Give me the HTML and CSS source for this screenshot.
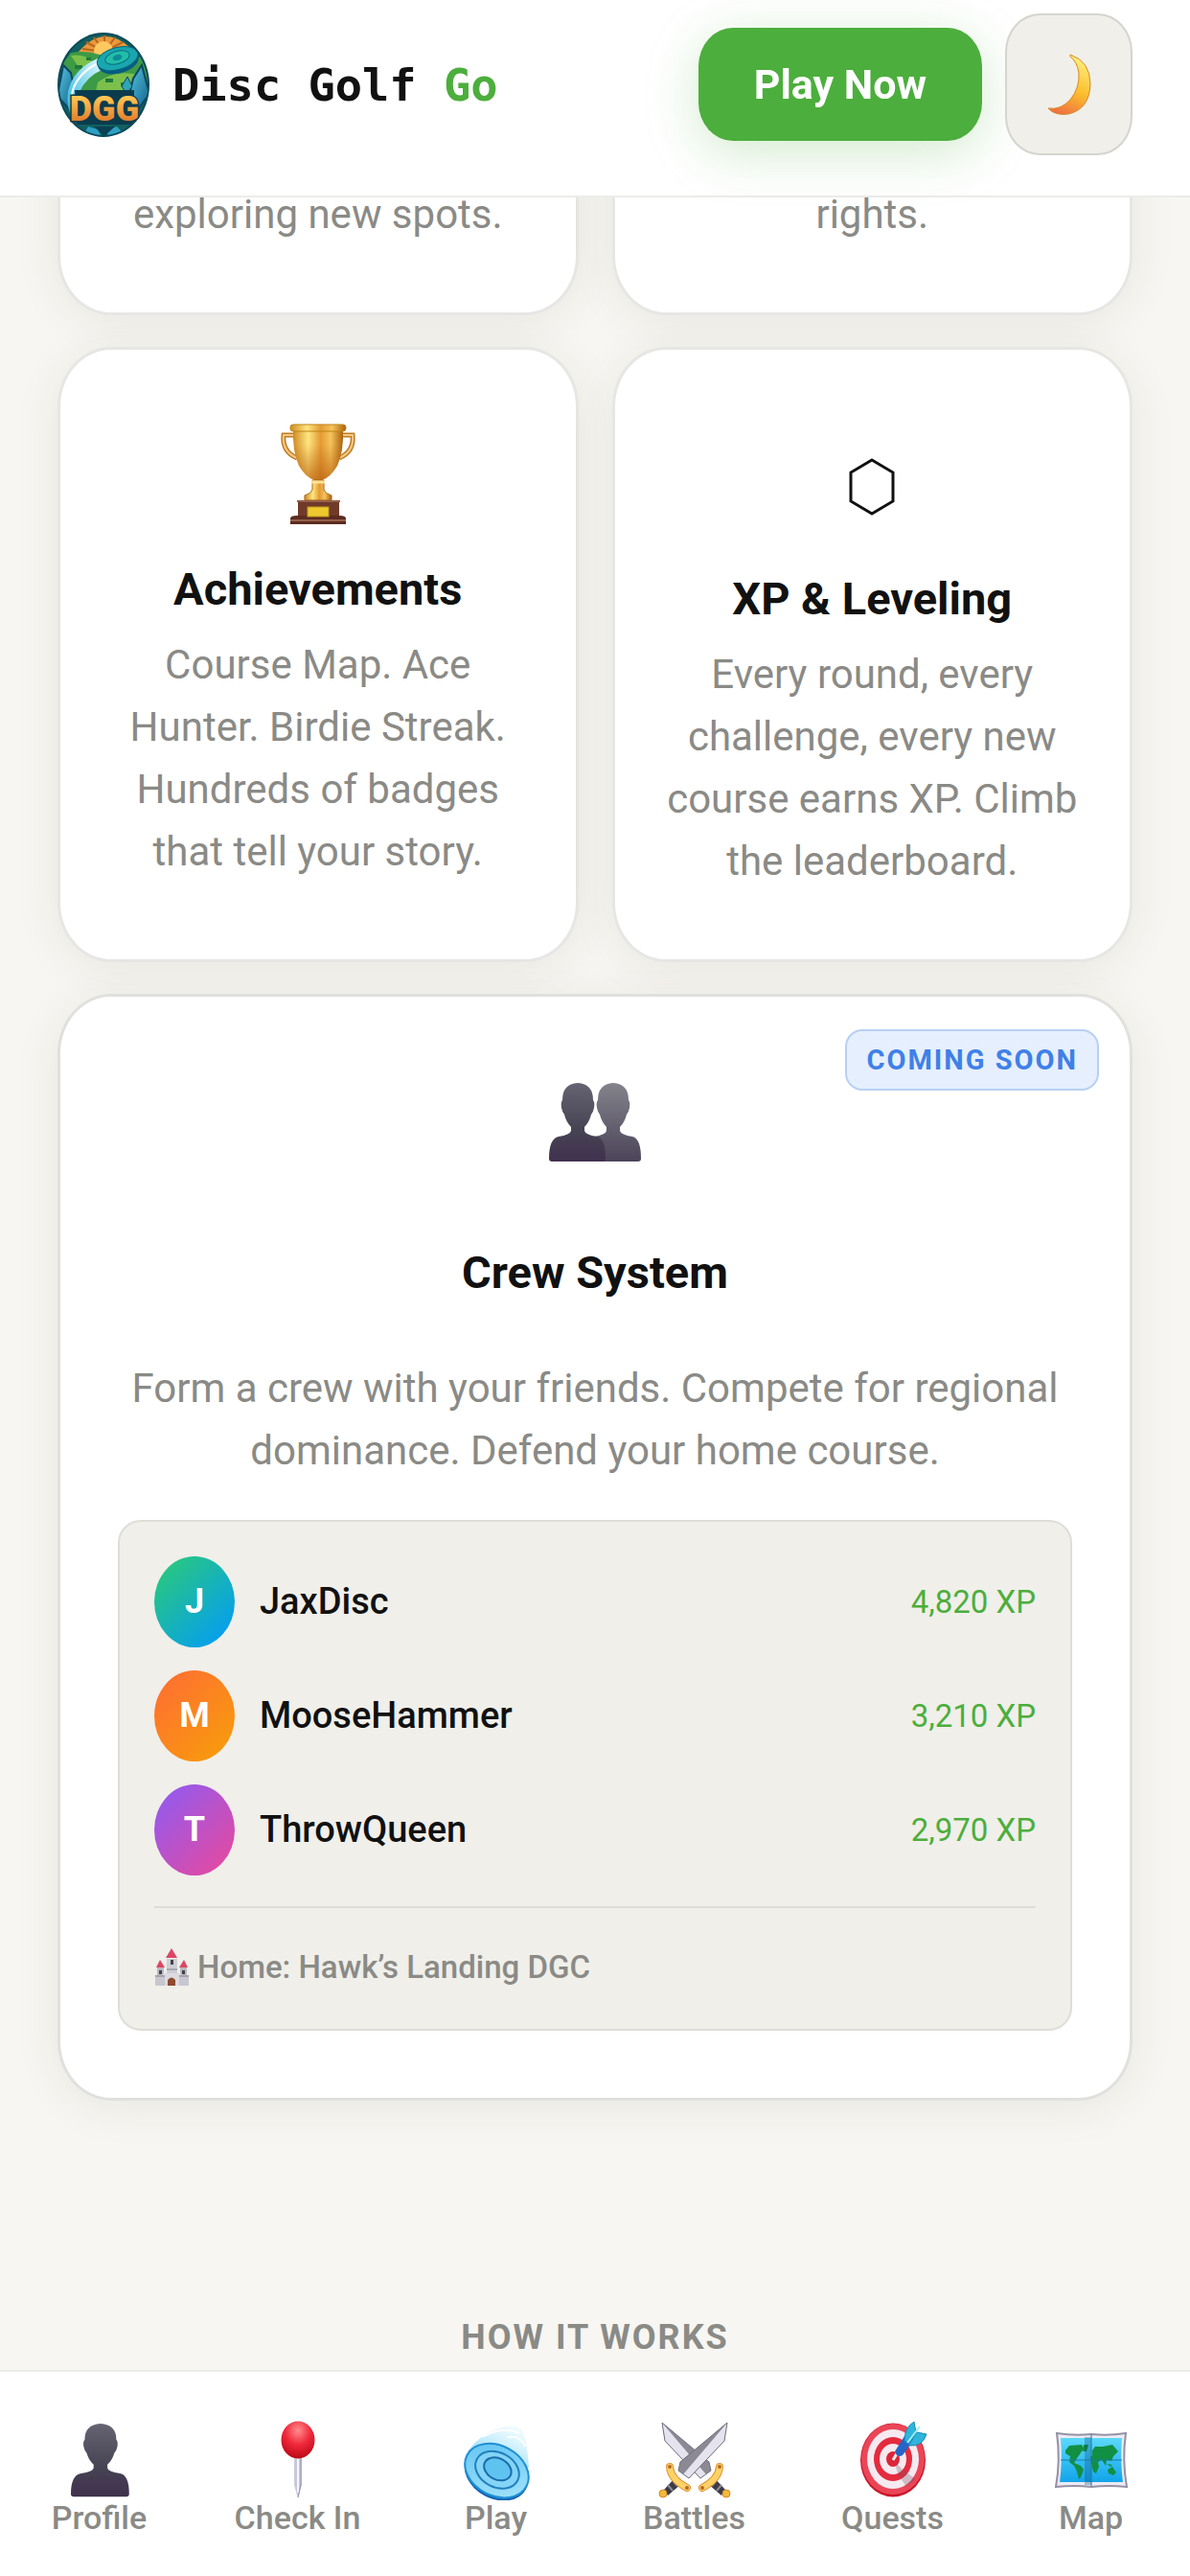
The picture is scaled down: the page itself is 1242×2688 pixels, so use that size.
FILE: index.html
```html
<!DOCTYPE html>
<html lang="en">
<head>
    <meta charset="utf-8">
    <meta name="viewport" content="width=device-width, initial-scale=1">
    <title>Disc Golf Go</title>
    <link rel="stylesheet" href="styles.css">
</head>
<body>
    <header class="site-header">
        <a class="brand" href="#">
            <svg class="brand-logo" viewBox="0 0 96 109" role="img" aria-label="Disc Golf Go logo">
                <defs>
                    <clipPath id="logo-clip"><ellipse cx="48" cy="54.500" rx="46" ry="52.500"/></clipPath>
                    <linearGradient id="logo-letters" x1="0" y1="0" x2="0" y2="1">
                        <stop offset="0.2" stop-color="#ffc653"/><stop offset="1" stop-color="#d8651f"/>
                    </linearGradient>
                    <linearGradient id="logo-crystal" x1="0" y1="0" x2="1" y2="1">
                        <stop offset="0" stop-color="#5bc9e0"/><stop offset="1" stop-color="#0e5f8c"/>
                    </linearGradient>
                    <linearGradient id="logo-trail" x1="1" y1="0" x2="0" y2="1">
                        <stop offset="0" stop-color="#e6fbff"/><stop offset="1" stop-color="#1fb4dc"/>
                    </linearGradient>
                </defs>
                <ellipse cx="48" cy="54.500" rx="48" ry="54.500" fill="#0c4a5a"/>
                <g clip-path="url(#logo-clip)">
                    <rect width="96" height="109" fill="#11605f"/>
                    <path d="M22 20Q48 -10 76 16L78 24H18Z" fill="#e9983b"/>
                    <path d="M49 20V3M49 20L38 5M49 20L60 5M49 20L30 10M49 20L68 10M49 20L26 17" stroke="#b9661f" stroke-width="2"/>
                    <circle cx="48" cy="19" r="10" fill="#ffc861"/>
                    <path d="M4 34L14 21Q30 18 44 23L96 26V70H4Z" fill="#3d9a46"/>
                    <path d="M14 24Q28 22 36 30T22 36ZM42 52Q60 38 84 44L78 62H40Z" fill="#7cc04b"/>
                    <path d="M18 34h8v4h-8zM50 48h8v4h-8zM66 52h7v4h-7zM30 26h5v3h-5z" fill="#1f7a3e"/>
                    <path d="M6 34L14 42L17 56L12 80L0 66Z" fill="url(#logo-crystal)" stroke="#0b4560" stroke-width="2"/>
                    <path d="M88 34L79 48L74 68L84 80L96 64Z" fill="url(#logo-crystal)" stroke="#0b4560" stroke-width="2"/>
                    <path d="M73 46L67 56L72 64L78 56Z" fill="#2fa5b5" stroke="#0b4560" stroke-width="1"/>
                    <path d="M42 27Q16 38 11 62Q8 78 18 94L23 62Q30 46 48 38Z" fill="url(#logo-trail)"/>
                    <path d="M42 32Q22 42 16 60Q13 72 16 84" fill="none" stroke="#fff" stroke-width="2"/>
                    <g transform="rotate(-16 63 28)">
                        <ellipse cx="63" cy="30" rx="22" ry="12.500" fill="#075c83"/>
                        <ellipse cx="63" cy="27" rx="22" ry="11.500" fill="#19a6ae" stroke="#08647c" stroke-width="1"/>
                        <ellipse cx="63" cy="26" rx="13" ry="6.500" fill="#22bda8" stroke="#096b80" stroke-width="1"/>
                        <ellipse cx="63" cy="26" rx="5" ry="3" fill="#0d8b98"/>
                    </g>
                    <path d="M18 60H80V96H20Z" fill="#0a3c4d"/>
                    <path d="M32 98L42 101L46 109H26ZM62 98L50 102L54 109H72Z" fill="#2f9fc4"/>
                    <path d="M38 98H60L49 108Z" fill="#0b4152"/>
                </g>
                <text class="logo-text" x="49" y="92" text-anchor="middle" fill="url(#logo-letters)">DGG</text>
            </svg>
            <span class="brand-name">Disc Golf <span class="brand-accent">Go</span></span>
        </a>
        <div class="header-actions">
            <button type="button" class="play-button">Play Now</button>
            <button type="button" class="theme-button" aria-label="Switch to dark mode">
                <svg width="46" height="64" viewBox="0 0 46 64">
                    <defs>
                        <linearGradient id="moon" x1="0.600" y1="0" x2="0.300" y2="1">
                            <stop offset="0" stop-color="#fff07c"/><stop offset="0.550" stop-color="#fbbd2c"/><stop offset="1" stop-color="#ef7043"/>
                        </linearGradient>
                    </defs>
                    <path d="M24 1Q45 8 45 32Q44 58 22 63Q8 65 1 57Q14 59 24 48Q34 36 33 20Q31 8 24 3Z" fill="url(#moon)" stroke="#d58a26" stroke-width="1"/>
                </svg>
            </button>
        </div>
    </header>

    <main class="page">
        <section class="features">
            <article class="card">
                <p class="card-text">exploring new spots.</p>
            </article>
            <article class="card">
                <p class="card-text">rights.</p>
            </article>

            <article class="card">
                <svg class="card-icon" width="120" height="120" viewBox="0 0 120 120" aria-hidden="true">
                    <defs>
                        <linearGradient id="cup" x1="0" y1="0" x2="1" y2="0">
                            <stop offset="0" stop-color="#d08a22"/><stop offset="0.300" stop-color="#ffe680"/><stop offset="0.550" stop-color="#e39a34"/><stop offset="0.750" stop-color="#f6c35b"/><stop offset="1" stop-color="#a9620f"/>
                        </linearGradient>
                        <linearGradient id="cup-shade" x1="0" y1="0" x2="0" y2="1">
                            <stop offset="0.300" stop-color="#b75d0d" stop-opacity="0"/><stop offset="1" stop-color="#b75d0d" stop-opacity="0.700"/>
                        </linearGradient>
                    </defs>
                    <path d="M37 19H24Q22 36 38 43M83 19H96Q98 36 82 43" fill="none" stroke="#c07c24" stroke-width="5"/>
                    <path d="M37 19H24Q22 36 38 43M83 19H96Q98 36 82 43" fill="none" stroke="#f3c985" stroke-width="2"/>
                    <path d="M34 12H86Q87 36 80 51Q73 63 64 66H56Q47 63 40 51Q33 36 34 12Z" fill="url(#cup)"/>
                    <path d="M34 12H86Q87 36 80 51Q73 63 64 66H56Q47 63 40 51Q33 36 34 12Z" fill="url(#cup-shade)"/>
                    <rect x="31" y="8" width="58" height="7" rx="3" fill="url(#cup)" stroke="#bd8412" stroke-width="1"/>
                    <path d="M54 66H66V76Q67 80 74 82V87H46V82Q53 80 54 76Z" fill="url(#cup)" stroke="#a7630f" stroke-width="1"/>
                    <path d="M53 68H67" stroke="#ffe39a" stroke-width="3"/>
                    <rect x="39" y="87" width="43" height="19" fill="#6f3a2a"/>
                    <path d="M31 106Q31 103 38 103H82Q89 103 89 106V112H31Z" fill="#5c2c20"/>
                    <path d="M38 88H83M31 108H89" stroke="#95604a" stroke-width="2"/>
                    <rect x="49" y="94" width="22" height="10" fill="#edc92e" stroke="#bf961c" stroke-width="1"/>
                </svg>
                <h3 class="card-title">Achievements</h3>
                <p class="card-text">Course Map. Ace Hunter. Birdie Streak. Hundreds of badges that tell your story.</p>
            </article>
            <article class="card">
                <svg class="card-icon" width="120" height="130" viewBox="0 0 120 130" aria-hidden="true">
                    <path d="M60 45L82 58V88L60 101L38 88V58Z" fill="none" stroke="#111" stroke-width="3"/>
                </svg>
                <h3 class="card-title">XP &amp; Leveling</h3>
                <p class="card-text">Every round, every challenge, every new course earns XP. Climb the leaderboard.</p>
            </article>

            <article class="card card-wide">
                <span class="badge">COMING SOON</span>
                <svg class="card-icon" width="120" height="130" viewBox="0 0 120 130" aria-hidden="true">
                    <defs>
                        <linearGradient id="person-back" x1="0" y1="0" x2="0" y2="1">
                            <stop offset="0" stop-color="#84838c"/><stop offset="1" stop-color="#4b4458"/>
                        </linearGradient>
                        <linearGradient id="person" x1="0" y1="0" x2="0" y2="1">
                            <stop offset="0" stop-color="#666472"/><stop offset="0.600" stop-color="#464453"/><stop offset="1" stop-color="#41304f"/>
                        </linearGradient>
                        <path id="bust" d="M30 0Q46 1 46 18Q48 20 47 26Q46 31 44 33Q42 41 37 46V50Q38 54 50 56Q59 58 59 79Q59 82 56 82H3Q0 82 0 79Q0 58 10 56Q22 54 23 50V46Q18 41 16 33Q14 31 13 26Q12 20 14 18Q14 1 30 0Z"/>
                    </defs>
                    <use href="#bust" x="49" y="20" fill="url(#person-back)"/>
                    <use href="#bust" x="12" y="20" fill="url(#person)"/>
                </svg>
                <h3 class="card-title">Crew System</h3>
                <div class="crew">
                    <p class="card-text">Form a crew with your friends. Compete for regional dominance. Defend your home course.</p>
                    <div class="crew-panel">
                        <ul class="crew-list">
                            <li class="crew-member">
                                <span class="avatar avatar-j">J</span>
                                <span class="member-name">JaxDisc</span>
                                <span class="member-xp">4,820 XP</span>
                            </li>
                            <li class="crew-member">
                                <span class="avatar avatar-m">M</span>
                                <span class="member-name">MooseHammer</span>
                                <span class="member-xp">3,210 XP</span>
                            </li>
                            <li class="crew-member">
                                <span class="avatar avatar-t">T</span>
                                <span class="member-name">ThrowQueen</span>
                                <span class="member-xp">2,970 XP</span>
                            </li>
                        </ul>
                        <p class="crew-home">
                            <svg width="36" height="40" viewBox="0 0 36 40" aria-hidden="true">
                                <path d="M3 20H10V38H3ZM27 20H34V38H27Z" fill="#b9b7bf"/>
                                <path d="M13 11H24V38H13Z" fill="#cfcdd5"/>
                                <path d="M9 26H28V39H9Z" fill="#dddbe1"/>
                                <path d="M1 28H11V39H1ZM26 28H36V39H26Z" fill="#c8c6ce"/>
                                <path d="M12 10L18 0L24 10ZM2 20L6 12L11 20ZM26 20L31 12L35 20Z" fill="#dc4665"/>
                                <path d="M14 39V33Q18 28 22 33V39Z" fill="#8e4b2f"/>
                                <path d="M17 12h3v5h-3zM5 23h3v4h-3zM29 23h3v4h-3z" fill="#45424d"/>
                                <path d="M13 22H24M1 29H11M26 29H36" stroke="#85828c" stroke-width="1"/>
                            </svg>
                            Home: Hawk’s Landing DGC
                        </p>
                    </div>
                </div>
            </article>
        </section>

        <section class="how">
            <h2 class="eyebrow">HOW IT WORKS</h2>
        </section>
    </main>

    <nav class="tab-bar">
        <a class="tab" href="#">
            <svg width="84" height="84" viewBox="0 0 84 84" aria-hidden="true">
                <use href="#bust" transform="translate(12 4) scale(1.03 0.93)" fill="url(#person)"/>
            </svg>
            Profile
        </a>
        <a class="tab" href="#">
            <svg width="84" height="84" viewBox="0 0 84 84" aria-hidden="true">
                <defs>
                    <radialGradient id="pin-head" cx="0.500" cy="0.250" r="0.750">
                        <stop offset="0" stop-color="#ff8d8d"/><stop offset="0.500" stop-color="#f02a3c"/><stop offset="1" stop-color="#bd0718"/>
                    </radialGradient>
                </defs>
                <path d="M38 36H46V68L42 82L38 68Z" fill="#c9c9dc"/>
                <path d="M42 38V76" stroke="#f5f5fc" stroke-width="2"/>
                <path d="M45 38V68L42 81" fill="none" stroke="#9390ad" stroke-width="1"/>
                <ellipse cx="42" cy="21" rx="17.500" ry="19.500" fill="url(#pin-head)"/>
            </svg>
            Check In
        </a>
        <a class="tab" href="#">
            <svg width="84" height="84" viewBox="0 0 84 84" aria-hidden="true">
                <defs>
                    <linearGradient id="disc-trail" x1="1" y1="0" x2="0.300" y2="1">
                        <stop offset="0" stop-color="#d8f6ff" stop-opacity="0.200"/><stop offset="1" stop-color="#76d2f4"/>
                    </linearGradient>
                    <linearGradient id="disc-top" x1="0" y1="0" x2="1" y2="1">
                        <stop offset="0" stop-color="#5fc3f2"/><stop offset="1" stop-color="#a6e5fb"/>
                    </linearGradient>
                </defs>
                <path d="M10 38Q20 16 48 8Q60 5 68 9Q74 20 76 50Z" fill="url(#disc-trail)"/>
                <path d="M28 18Q48 6 66 14M44 8Q58 2 66 8M54 18Q68 16 72 28" fill="none" stroke="#fff" stroke-width="2"/>
                <g transform="rotate(28 42 54)">
                    <ellipse cx="43" cy="56" rx="35" ry="26" fill="#1464b4"/>
                    <ellipse cx="42" cy="53" rx="35" ry="26" fill="url(#disc-top)" stroke="#1e8fd3" stroke-width="2"/>
                    <ellipse cx="42" cy="52" rx="24" ry="18" fill="#83d4f7" stroke="#2180bd" stroke-width="2"/>
                    <ellipse cx="42" cy="51" rx="15" ry="11" fill="#5fc3ef" stroke="#1c6dab" stroke-width="2"/>
                </g>
            </svg>
            Play
        </a>
        <a class="tab" href="#">
            <svg width="84" height="84" viewBox="0 0 84 84" aria-hidden="true">
                <defs>
                    <g id="sword">
                        <path d="M76 3L73 22L36 61L25 53L27 44Z" fill="#8b8993"/>
                        <path d="M76 3L73 22L36 61L30 57Z" fill="#e4e3ee"/>
                        <path d="M76 3L27 44L25 53L36 61L73 22Z" fill="none" stroke="#716f7c" stroke-width="1"/>
                        <path d="M22 60L10 73L14 79L28 67Z" fill="#3c3b47"/>
                        <path d="M19 63L24 69M14 68L19 74" stroke="#8c8b98" stroke-width="2"/>
                        <circle cx="9" cy="77" r="4" fill="#f5b93c" stroke="#d08b24" stroke-width="1"/>
                        <path d="M16 49Q17 62 34 71" fill="none" stroke="#dc9330" stroke-width="8" stroke-linecap="round"/>
                        <path d="M16 49Q17 62 34 71" fill="none" stroke="#ffd166" stroke-width="6" stroke-linecap="round"/>
                        <circle cx="16" cy="49" r="2" fill="#b7682b"/><circle cx="34" cy="71" r="2" fill="#b7682b"/>
                    </g>
                </defs>
                <use href="#sword" transform="matrix(-1 0 0 1 84 0)"/>
                <use href="#sword"/>
            </svg>
            Battles
        </a>
        <a class="tab" href="#">
            <svg width="84" height="84" viewBox="0 0 84 84" aria-hidden="true">
                <ellipse cx="42" cy="42" rx="34" ry="38.500" fill="#c9152a"/>
                <ellipse cx="42" cy="41" rx="33" ry="37" fill="#ea4657"/>
                <ellipse cx="42" cy="41" rx="27" ry="31" fill="#f5eaf0"/>
                <ellipse cx="42" cy="41" rx="20" ry="23" fill="#e52b3e"/>
                <ellipse cx="42" cy="41" rx="14" ry="16" fill="#f5eaf0"/>
                <ellipse cx="42" cy="41" rx="7" ry="8" fill="#df2438"/>
                <path d="M43 42L52 52L66 62L56 70L47 56Z" fill="#735466" opacity="0.300"/>
                <path d="M42 42L48 32" stroke="#eee" stroke-width="3"/>
                <path d="M44 33L54 17L62 23L52 37Q46 40 44 33Z" fill="#2465c8"/>
                <path d="M54 22Q54 8 64 2L66 13L60 25ZM59 24L67 13L77 15Q73 28 59 27Z" fill="#2fb4db" stroke="#188eb8" stroke-width="1"/>
                <path d="M57 24L70 7" stroke="#a2edff" stroke-width="2"/>
            </svg>
            Quests
        </a>
        <a class="tab" href="#">
            <svg width="84" height="84" viewBox="0 0 84 84" aria-hidden="true">
                <defs>
                    <linearGradient id="sea" x1="0" y1="0" x2="0" y2="1">
                        <stop offset="0" stop-color="#5bd9fb"/><stop offset="1" stop-color="#12a4ea"/>
                    </linearGradient>
                </defs>
                <path d="M6 14Q24 17 42 15Q60 17 78 14Q74 42 79 70Q60 68 42 70Q24 68 5 70Q10 42 6 14Z" fill="#ecebf4" stroke="#9591a5" stroke-width="2"/>
                <path d="M10 19H74Q72 42 75 65H9Q12 42 10 19Z" fill="url(#sea)"/>
                <path d="M15 32L19 27L32 26L34 30L30 36L27 40L24 45L31 48L34 52L31 60L29 62L27 54L24 48L19 44L20 38L15 35ZM34 26L39 26L37 33L33 33ZM43 32L46 28L54 28L64 26L70 33L65 38L63 43L58 42L57 48L53 42L49 44L50 49L47 56L44 54L42 46L41 39L43 37ZM59 52L64 49L68 55L65 58L60 56ZM58 46L64 47L62 49Z" fill="#118f42"/>
                <path d="M35 18H42V68H35Z" fill="#0a467b" opacity="0.300"/>
                <path d="M42 16V69M10 42H74" stroke="#197ca3" stroke-width="1"/>
            </svg>
            Map
        </a>
    </nav>
</body>
</html>
```
FILE: styles.css
```css
* {
    box-sizing: border-box;
}

body {
    margin: 0;
    min-height: 100vh;
    background-color: #f7f6f2;
    color: #111;
    font-family: Roboto, "Liberation Sans", sans-serif;
    font-size: 42px;
    line-height: 65px;
}

h2, h3, p, ul {
    margin: 0;
    padding: 0;
}

a {
    color: inherit;
    text-decoration: none;
}

button {
    font-family: inherit;
    cursor: pointer;
}

/* header */
.site-header {
    position: fixed;
    top: 0;
    left: 0;
    right: 0;
    z-index: 10;
    display: flex;
    align-items: center;
    justify-content: space-between;
    padding: 14px 60px 42px;
    background-color: #fff;
    border-bottom: 2px solid #ececea;
}

.brand {
    display: flex;
    align-items: center;
    gap: 24px;
}

.brand-logo {
    width: 96px;
    height: 109px;
}

.logo-text {
    font-size: 36px;
    font-weight: 900;
    stroke: #0a3c4d;
    stroke-width: 3px;
    paint-order: stroke;
}

.brand-name {
    font-family: "DejaVu Sans Mono", monospace;
    font-size: 47px;
    font-weight: bold;
    white-space: nowrap;
}

.brand-accent {
    color: #4cae3c;
}

.header-actions {
    display: flex;
    align-items: center;
    gap: 24px;
}

.play-button {
    height: 118px;
    padding: 0 58px;
    border: none;
    border-radius: 36px / 40px;
    background-color: #4cae3c;
    box-shadow: 0 12px 54px rgba(76, 174, 60, 0.25);
    color: #fff;
    font-size: 43px;
    font-weight: bold;
}

.theme-button {
    display: flex;
    align-items: center;
    justify-content: center;
    width: 133px;
    height: 148px;
    padding: 0;
    border: 2px solid #d5d4ce;
    border-radius: 36px / 40px;
    background-color: #f0efea;
}

/* feature cards */
.page {
    padding: 118px 60px 215px;
}

.features {
    display: grid;
    grid-template-columns: 1fr 1fr;
    gap: 33px 35px;
}

.card {
    position: relative;
    display: flex;
    flex-direction: column;
    align-items: center;
    padding: 70px 52px;
    border: 3px solid #e6e6e4;
    border-radius: 56px / 62px;
    background-color: #fff;
    box-shadow: 0 6px 48px rgba(60, 55, 30, 0.08);
    text-align: center;
}

.card-icon {
    margin-bottom: 32px;
}

.card-title {
    margin-bottom: 18px;
    font-size: 47px;
    font-weight: bold;
    line-height: 56px;
}

.card-text {
    color: #8a8a86;
}

.card-wide {
    grid-column: 1 / -1;
    padding: 70px 60px;
    border-color: #e0e0de;
}

.card-wide .card-icon,
.card-wide .card-title {
    margin-bottom: 60px;
}

.badge {
    position: absolute;
    top: 34px;
    right: 32px;
    padding: 0 20px;
    border: 2px solid #b7d0f5;
    border-radius: 18px;
    background-color: #e6effd;
    color: #3f80e8;
    font-size: 29px;
    font-weight: bold;
    line-height: 60px;
    letter-spacing: 2px;
}

/* crew */
.crew {
    align-self: stretch;
}

.crew-panel {
    margin-top: 40px;
    padding: 36px 36px 39px;
    border: 2px solid #deddd8;
    border-radius: 24px;
    background-color: #f0efea;
    text-align: left;
}

.crew-list {
    display: flex;
    flex-direction: column;
    gap: 24px;
    padding-bottom: 32px;
    border-bottom: 2px solid #deddd8;
    list-style: none;
}

.crew-member {
    display: flex;
    align-items: center;
    gap: 26px;
}

.avatar {
    display: flex;
    align-items: center;
    justify-content: center;
    width: 84px;
    height: 95px;
    border-radius: 50%;
    color: #fff;
    font-size: 36px;
    font-weight: bold;
}

.avatar-j {
    background: linear-gradient(135deg, #2ecc71, #0099ff);
}

.avatar-m {
    background: linear-gradient(135deg, #ff6b35, #f7a008);
}

.avatar-t {
    background: linear-gradient(135deg, #8b5cf6, #ec4899);
}

.member-name {
    flex: 1;
    font-size: 38px;
    font-weight: 500;
}

.member-xp {
    color: #4cae3c;
    font-size: 33px;
}

.crew-home {
    display: flex;
    align-items: center;
    gap: 9px;
    padding-top: 37px;
    color: #8a8a86;
    font-size: 33px;
    font-weight: 500;
    line-height: 50px;
}

/* how it works */
.how {
    padding-top: 222px;
    text-align: center;
}

.eyebrow {
    color: #8a8a86;
    font-size: 36px;
    font-weight: bold;
    line-height: 50px;
    letter-spacing: 2px;
}

/* bottom tab bar */
.tab-bar {
    position: fixed;
    bottom: 0;
    left: 0;
    right: 0;
    z-index: 10;
    display: grid;
    grid-template-columns: repeat(6, 1fr);
    padding: 50px 0 42px;
    background-color: #fff;
    border-top: 2px solid #ececea;
}

.tab {
    display: flex;
    flex-direction: column;
    align-items: center;
    color: #8a8a86;
    font-size: 34px;
    font-weight: 500;
    line-height: 37px;
}
```
